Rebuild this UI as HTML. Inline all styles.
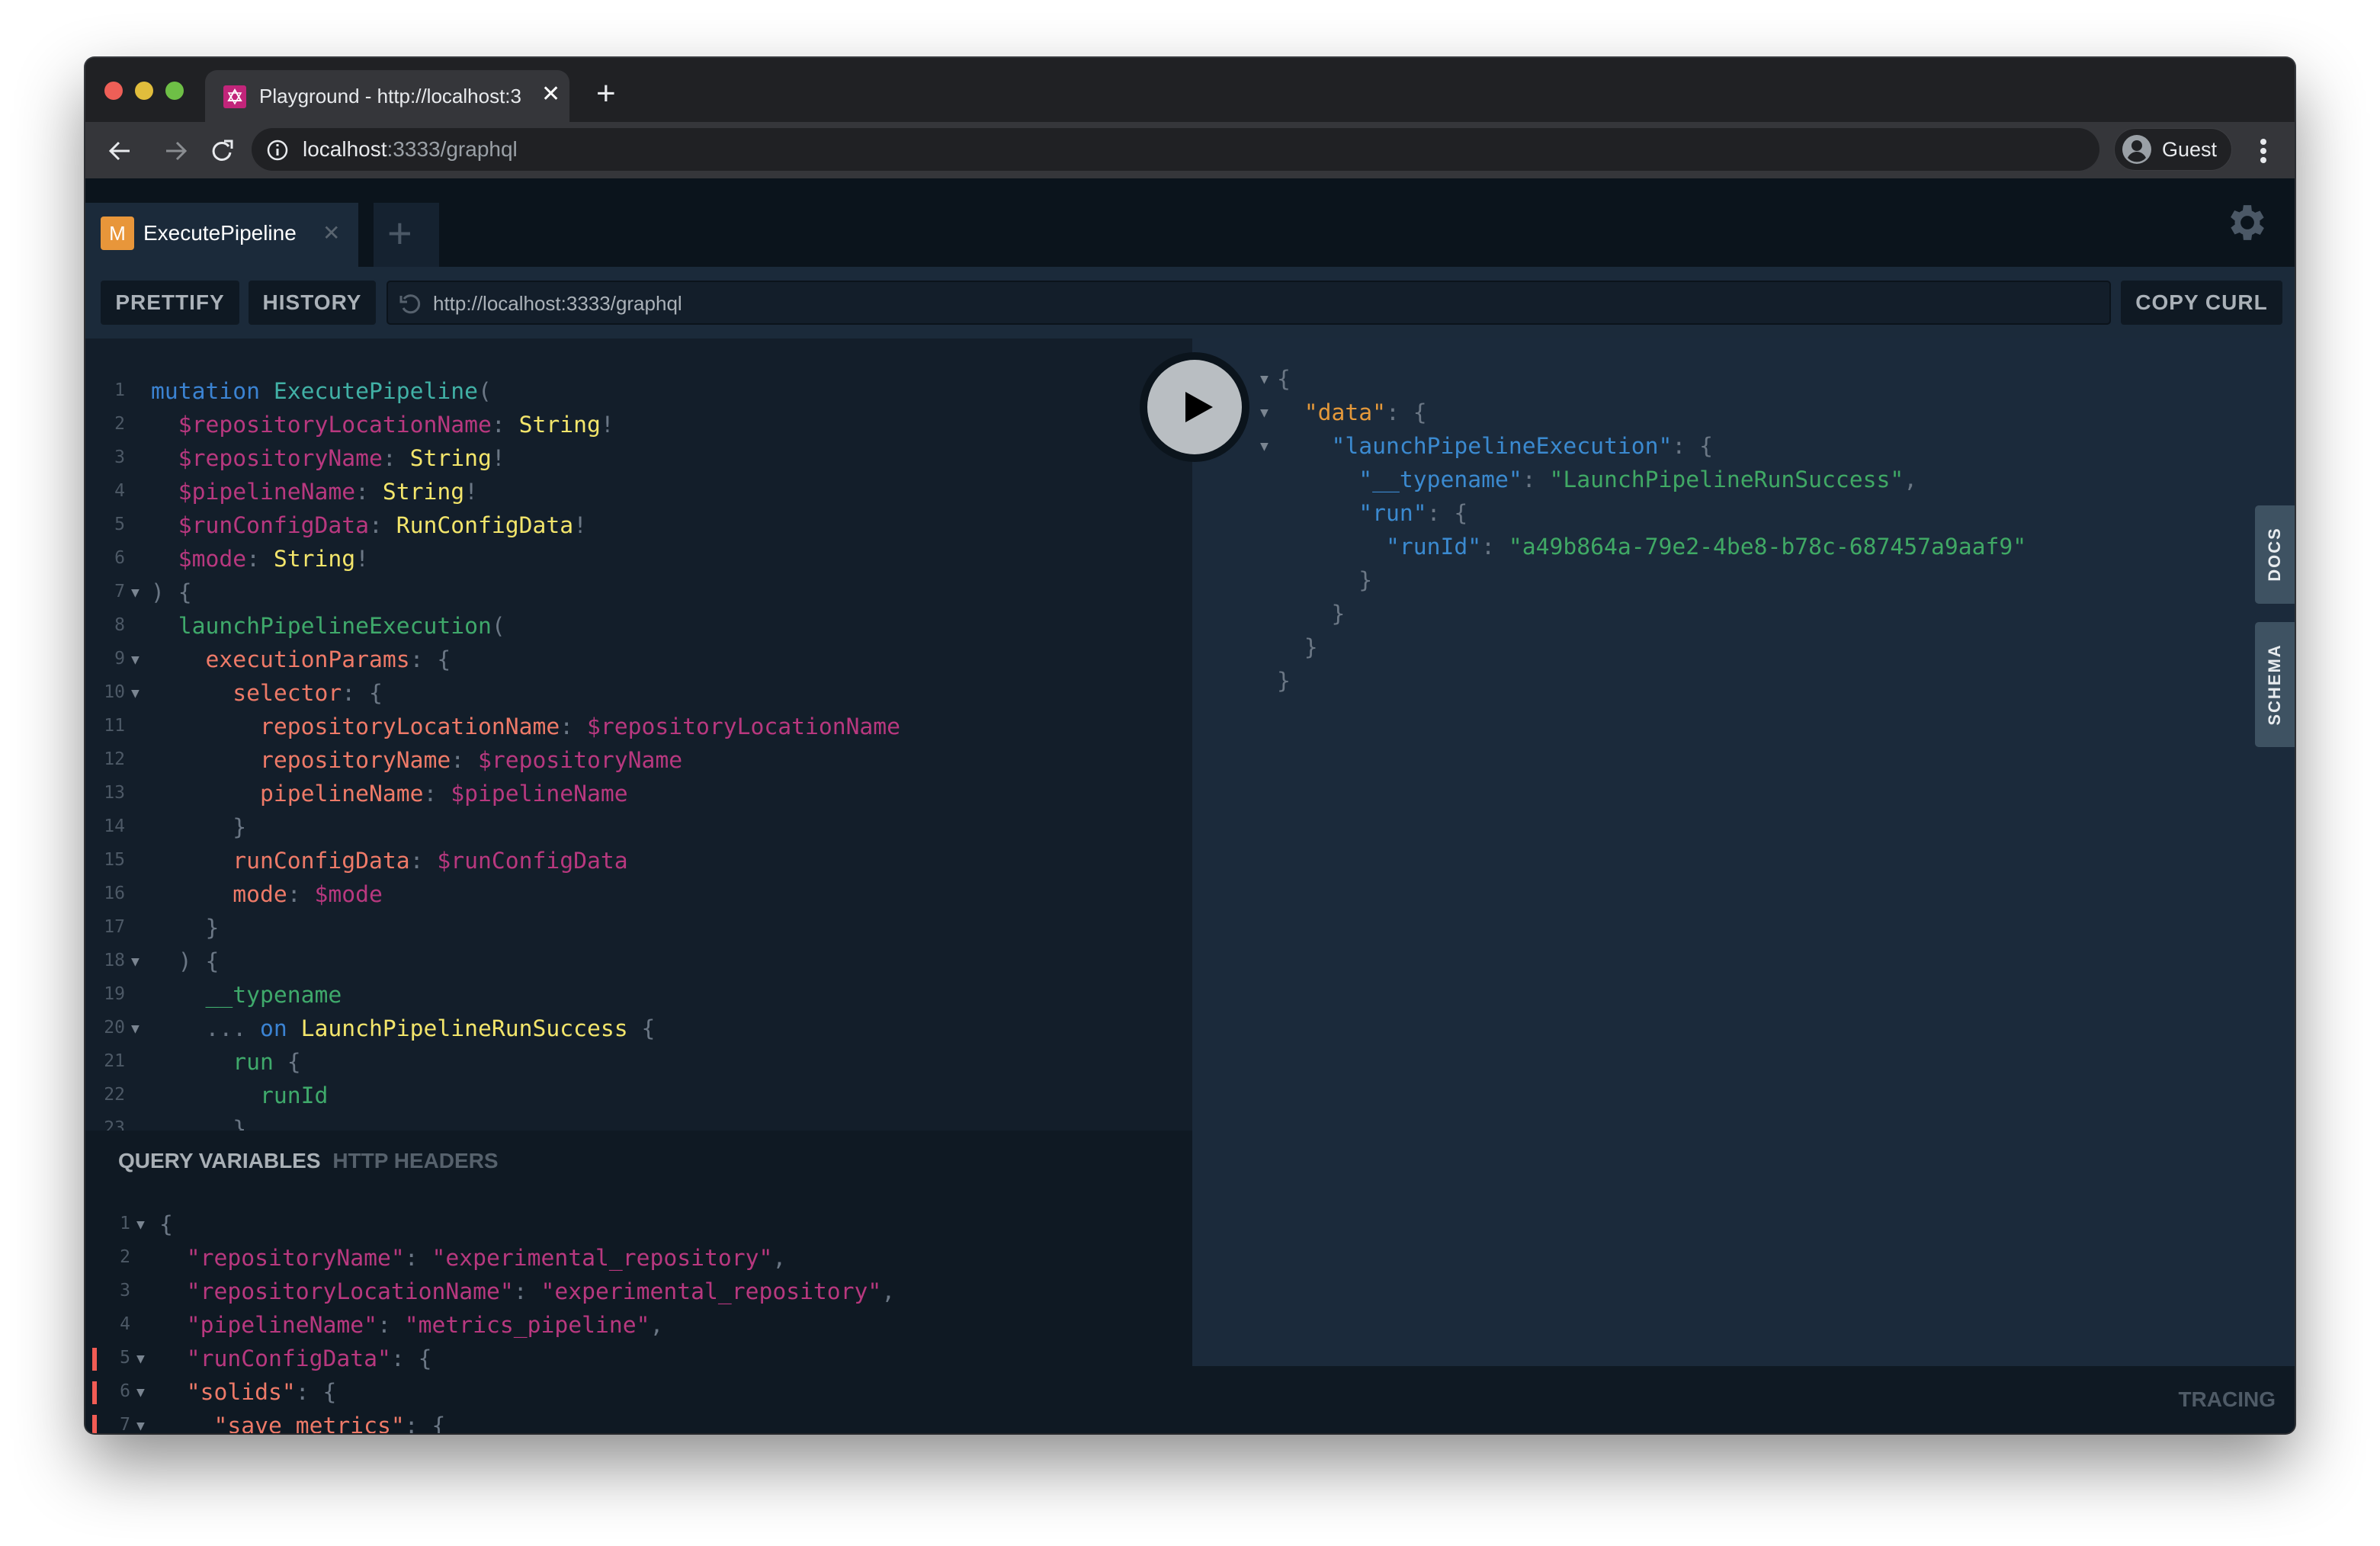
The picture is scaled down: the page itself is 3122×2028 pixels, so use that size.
<!DOCTYPE html>
<html><head><meta charset="utf-8"><style>
*{margin:0;padding:0;box-sizing:border-box}
body{width:3122px;height:2028px;background:#fff;position:relative;overflow:hidden;font-family:"Liberation Sans",sans-serif}
.a{position:absolute}
.win{left:112px;top:76px;width:2898px;height:1804px;border-radius:12px;overflow:hidden;background:#0b141c;box-shadow:0 40px 90px rgba(0,0,0,.45),0 0 0 2px #3a3d42}
.mono{font-family:"DejaVu Sans Mono","Liberation Mono",monospace;font-size:29.7px;white-space:pre}
.ln{position:absolute;height:44px;line-height:44px;width:100%}
.g{position:absolute;text-align:right;font-family:"DejaVu Sans Mono",monospace;font-size:23px;color:#4d5966;line-height:40px}
.ar{position:absolute;font-size:18px;color:#7a8591;line-height:44px}
.kw{color:#3b83d2}.df{color:#41b1a6}.vr{color:#b8387f}.ty{color:#f3e56b}.fd{color:#3fa96b}.at{color:#ee7a68}.p{color:#6b7785}.or{color:#e5993a}.jk{color:#3b8ad0}.js{color:#40a965}
.btn{position:absolute;top:292px;height:58px;background:#0f1923;border-radius:4px;color:#aab1b8;font-weight:bold;font-size:28px;line-height:58px;text-align:center;letter-spacing:1px}
</style></head><body>
<div class="a win">
 <div class="a" style="left:0;top:0;width:2898px;height:84px;background:#202124"></div>
 <div class="a" style="left:25px;top:31px;width:24px;height:24px;border-radius:50%;background:#ee5f57"></div>
 <div class="a" style="left:65px;top:31px;width:24px;height:24px;border-radius:50%;background:#e1bd3c"></div>
 <div class="a" style="left:105px;top:31px;width:24px;height:24px;border-radius:50%;background:#6ebf46"></div>
 <div class="a" style="left:157px;top:16px;width:478px;height:70px;background:#35363a;border-radius:16px 16px 0 0"></div>
 <div class="a" style="left:181px;top:36px;width:30px;height:30px;background:#c2257a;border-radius:3px"><svg width="30" height="30" viewBox="0 0 30 30"><polygon points="15,6 23,20 7,20" fill="none" stroke="#fff" stroke-width="2"/><polygon points="15,24 7,10 23,10" fill="none" stroke="#fff" stroke-width="1.5"/></svg></div>
 <div class="a" style="left:228px;top:30px;font-size:26px;color:#e8eaed;line-height:40px;width:360px;overflow:hidden;white-space:nowrap">Playground - http://localhost:3</div>
 <div class="a" style="left:598px;top:28px;font-size:30px;color:#fff;line-height:40px">✕</div>
 <div class="a" style="left:670px;top:22px;font-size:44px;color:#e8eaed;line-height:50px">+</div>
 <div class="a" style="left:0;top:84px;width:2898px;height:74px;background:#35363a"></div>
 <svg class="a" style="left:28px;top:104px" width="290" height="36" viewBox="0 0 290 36"><path d="M30 18H6M16 7L5 18l11 11" stroke="#e8eaed" stroke-width="3" fill="none"/><path d="M78 18h24M92 7l11 11-11 11" stroke="#8a8d91" stroke-width="3" fill="none"/><path d="M160 12a11 11 0 1 0 2 8" stroke="#e8eaed" stroke-width="3" fill="none"/><path d="M154 5h10v10" stroke="#e8eaed" stroke-width="3" fill="none"/></svg>
 <div class="a" style="left:218px;top:92px;width:2424px;height:56px;border-radius:28px;background:#202124"></div>
 <svg class="a" style="left:238px;top:107px" width="28" height="28" viewBox="0 0 28 28"><circle cx="14" cy="14" r="12" stroke="#e8eaed" stroke-width="2.5" fill="none"/><rect x="12.5" y="12" width="3" height="9" fill="#e8eaed"/><rect x="12.5" y="6" width="3" height="3" fill="#e8eaed"/></svg>
 <div class="a" style="left:285px;top:100px;font-size:28px;line-height:40px;color:#e8eaed">localhost<span style="color:#9aa0a6">:3333/graphql</span></div>
 <div class="a" style="left:2661px;top:92px;width:155px;height:56px;border-radius:28px;background:#202124;border:1px solid #3c3d41"></div>
 <svg class="a" style="left:2672px;top:101px" width="38" height="38" viewBox="0 0 38 38"><circle cx="19" cy="19" r="19" fill="#9aa0a6"/><circle cx="19" cy="14" r="7" fill="#202124"/><path d="M7 30c3-6 8-8 12-8s9 2 12 8a16 16 0 0 1-24 0z" fill="#202124"/></svg>
 <div class="a" style="left:2724px;top:100px;font-size:27px;line-height:40px;color:#e8eaed">Guest</div>
 <div class="a" style="left:2853px;top:106px;width:8px;height:8px;border-radius:50%;background:#e8eaed"></div>
 <div class="a" style="left:2853px;top:118px;width:8px;height:8px;border-radius:50%;background:#e8eaed"></div>
 <div class="a" style="left:2853px;top:130px;width:8px;height:8px;border-radius:50%;background:#e8eaed"></div>
 <div class="a" style="left:0;top:190px;width:358px;height:84px;background:#1b2a3a"></div>
 <div class="a" style="left:20px;top:208px;width:44px;height:44px;background:#e8963a;border-radius:4px;color:#fff;font-size:26px;line-height:44px;text-align:center">M</div>
 <div class="a" style="left:76px;top:210px;font-size:28px;color:#fff;line-height:40px">ExecutePipeline</div>
 <div class="a" style="left:311px;top:210px;font-size:28px;color:#5a6570;line-height:40px">✕</div>
 <div class="a" style="left:378px;top:190px;width:86px;height:84px;background:#152230"></div>
 <div class="a" style="left:396px;top:198px;font-size:56px;color:#4b5866;line-height:64px">+</div>
 <svg class="a" style="left:2808px;top:188px" width="56" height="56" viewBox="2 1 22 22"><path fill="#4b5866" d="M19.4 13a7.5 7.5 0 0 0 0-2l2.1-1.6-2-3.5-2.5 1a7 7 0 0 0-1.7-1L15 3h-4l-.4 2.7a7 7 0 0 0-1.7 1l-2.5-1-2 3.5L6.6 11a7.5 7.5 0 0 0 0 2l-2.1 1.6 2 3.5 2.5-1a7 7 0 0 0 1.7 1L11 21h4l.4-2.7a7 7 0 0 0 1.7-1l2.5 1 2-3.5zM13 15.5a3.5 3.5 0 1 1 0-7 3.5 3.5 0 0 1 0 7z"/></svg>
 <div class="a" style="left:0;top:274px;width:2898px;height:94px;background:#1b2a3a"></div>
 <div class="btn" style="left:20px;width:182px">PRETTIFY</div>
 <div class="btn" style="left:214px;width:167px">HISTORY</div>
 <div class="a" style="left:395px;top:292px;width:2262px;height:58px;background:#131e2a;border:2px solid #0b131b;border-radius:5px"></div>
 <svg class="a" style="left:410px;top:306px" width="32" height="32" viewBox="0 0 32 32"><path d="M8 10a11 11 0 1 1-1 12" stroke="#56616d" stroke-width="3" fill="none"/><path d="M4 6v8h8" stroke="#56616d" stroke-width="3" fill="none"/></svg>
 <div class="a" style="left:456px;top:302px;font-size:26px;color:#aab1b8;line-height:40px">http://localhost:3333/graphql</div>
 <div class="btn" style="left:2670px;width:212px">COPY CURL</div>

 <div class="a mono" style="left:0;top:368px;width:1452px;height:1039px;background:#131e2a;overflow:hidden">
  <div style="position:absolute;left:0;top:48px;width:100%">
   <div class="ln" style="top:0"><span class="g" style="width:52px">1</span><span style="position:absolute;left:86px"><span class="kw">mutation</span> <span class="df">ExecutePipeline</span><span class="p">(</span></span></div>
   <div class="ln" style="top:44px"><span class="g" style="width:52px">2</span><span style="position:absolute;left:86px">  <span class="vr">$repositoryLocationName</span><span class="p">:</span> <span class="ty">String</span><span class="p">!</span></span></div>
   <div class="ln" style="top:88px"><span class="g" style="width:52px">3</span><span style="position:absolute;left:86px">  <span class="vr">$repositoryName</span><span class="p">:</span> <span class="ty">String</span><span class="p">!</span></span></div>
   <div class="ln" style="top:132px"><span class="g" style="width:52px">4</span><span style="position:absolute;left:86px">  <span class="vr">$pipelineName</span><span class="p">:</span> <span class="ty">String</span><span class="p">!</span></span></div>
   <div class="ln" style="top:176px"><span class="g" style="width:52px">5</span><span style="position:absolute;left:86px">  <span class="vr">$runConfigData</span><span class="p">:</span> <span class="ty">RunConfigData</span><span class="p">!</span></span></div>
   <div class="ln" style="top:220px"><span class="g" style="width:52px">6</span><span style="position:absolute;left:86px">  <span class="vr">$mode</span><span class="p">:</span> <span class="ty">String</span><span class="p">!</span></span></div>
   <div class="ln" style="top:264px"><span class="g" style="width:52px">7</span><span class="ar" style="left:60px">▼</span><span style="position:absolute;left:86px"><span class="p">) {</span></span></div>
   <div class="ln" style="top:308px"><span class="g" style="width:52px">8</span><span style="position:absolute;left:86px">  <span class="fd">launchPipelineExecution</span><span class="p">(</span></span></div>
   <div class="ln" style="top:352px"><span class="g" style="width:52px">9</span><span class="ar" style="left:60px">▼</span><span style="position:absolute;left:86px">    <span class="at">executionParams</span><span class="p">: {</span></span></div>
   <div class="ln" style="top:396px"><span class="g" style="width:52px">10</span><span class="ar" style="left:60px">▼</span><span style="position:absolute;left:86px">      <span class="at">selector</span><span class="p">: {</span></span></div>
   <div class="ln" style="top:440px"><span class="g" style="width:52px">11</span><span style="position:absolute;left:86px">        <span class="at">repositoryLocationName</span><span class="p">:</span> <span class="vr">$repositoryLocationName</span></span></div>
   <div class="ln" style="top:484px"><span class="g" style="width:52px">12</span><span style="position:absolute;left:86px">        <span class="at">repositoryName</span><span class="p">:</span> <span class="vr">$repositoryName</span></span></div>
   <div class="ln" style="top:528px"><span class="g" style="width:52px">13</span><span style="position:absolute;left:86px">        <span class="at">pipelineName</span><span class="p">:</span> <span class="vr">$pipelineName</span></span></div>
   <div class="ln" style="top:572px"><span class="g" style="width:52px">14</span><span style="position:absolute;left:86px">      <span class="p">}</span></span></div>
   <div class="ln" style="top:616px"><span class="g" style="width:52px">15</span><span style="position:absolute;left:86px">      <span class="at">runConfigData</span><span class="p">:</span> <span class="vr">$runConfigData</span></span></div>
   <div class="ln" style="top:660px"><span class="g" style="width:52px">16</span><span style="position:absolute;left:86px">      <span class="at">mode</span><span class="p">:</span> <span class="vr">$mode</span></span></div>
   <div class="ln" style="top:704px"><span class="g" style="width:52px">17</span><span style="position:absolute;left:86px">    <span class="p">}</span></span></div>
   <div class="ln" style="top:748px"><span class="g" style="width:52px">18</span><span class="ar" style="left:60px">▼</span><span style="position:absolute;left:86px">  <span class="p">) {</span></span></div>
   <div class="ln" style="top:792px"><span class="g" style="width:52px">19</span><span style="position:absolute;left:86px">    <span class="fd">__typename</span></span></div>
   <div class="ln" style="top:836px"><span class="g" style="width:52px">20</span><span class="ar" style="left:60px">▼</span><span style="position:absolute;left:86px">    <span class="p">...</span> <span class="kw">on</span> <span class="ty">LaunchPipelineRunSuccess</span> <span class="p">{</span></span></div>
   <div class="ln" style="top:880px"><span class="g" style="width:52px">21</span><span style="position:absolute;left:86px">      <span class="fd">run</span> <span class="p">{</span></span></div>
   <div class="ln" style="top:924px"><span class="g" style="width:52px">22</span><span style="position:absolute;left:86px">        <span class="fd">runId</span></span></div>
   <div class="ln" style="top:968px"><span class="g" style="width:52px">23</span><span style="position:absolute;left:86px">      <span class="p">}</span></span></div>
  </div>
 </div>

 <div class="a mono" style="left:1452px;top:368px;width:1446px;height:1348px;background:#1b2a3b;overflow:hidden">
  <div style="position:absolute;left:0;top:32px;width:100%">
   <div class="ln" style="top:0"><span class="ar" style="left:89px">▼</span><span style="position:absolute;left:111px"><span class="p">{</span></span></div>
   <div class="ln" style="top:44px"><span class="ar" style="left:89px">▼</span><span style="position:absolute;left:111px">  <span class="or">"data"</span><span class="p">: {</span></span></div>
   <div class="ln" style="top:88px"><span class="ar" style="left:89px">▼</span><span style="position:absolute;left:111px">    <span class="jk">"launchPipelineExecution"</span><span class="p">: {</span></span></div>
   <div class="ln" style="top:132px"><span style="position:absolute;left:111px">      <span class="jk">"__typename"</span><span class="p">:</span> <span class="js">"LaunchPipelineRunSuccess"</span><span class="p">,</span></span></div>
   <div class="ln" style="top:176px"><span style="position:absolute;left:111px">      <span class="jk">"run"</span><span class="p">: {</span></span></div>
   <div class="ln" style="top:220px"><span style="position:absolute;left:111px">        <span class="jk">"runId"</span><span class="p">:</span> <span class="js">"a49b864a-79e2-4be8-b78c-687457a9aaf9"</span></span></div>
   <div class="ln" style="top:264px"><span style="position:absolute;left:111px">      <span class="p">}</span></span></div>
   <div class="ln" style="top:308px"><span style="position:absolute;left:111px">    <span class="p">}</span></span></div>
   <div class="ln" style="top:352px"><span style="position:absolute;left:111px">  <span class="p">}</span></span></div>
   <div class="ln" style="top:396px"><span style="position:absolute;left:111px"><span class="p">}</span></span></div>
  </div>
 </div>
 <div class="a" style="left:2846px;top:587px;width:52px;height:129px;background:#3e5262;border-radius:5px 0 0 5px"></div>
 <div class="a" style="left:2872px;top:651px;transform:translate(-50%,-50%) rotate(-90deg);color:#e8ecef;font-weight:bold;font-size:22px;letter-spacing:2px;white-space:nowrap">DOCS</div>
 <div class="a" style="left:2846px;top:740px;width:52px;height:164px;background:#3e5262;border-radius:5px 0 0 5px"></div>
 <div class="a" style="left:2872px;top:822px;transform:translate(-50%,-50%) rotate(-90deg);color:#e8ecef;font-weight:bold;font-size:22px;letter-spacing:2px;white-space:nowrap">SCHEMA</div>
 <div class="a" style="left:1452px;top:1716px;width:1446px;height:88px;background:#0f1923"></div>
 <div class="a" style="right:25px;top:1740px;font-weight:bold;font-size:28px;line-height:40px;color:#4f5b67">TRACING</div>

 <div class="a" style="left:1383px;top:386px;width:144px;height:144px;border-radius:50%;background:#0b141c"></div>
 <div class="a" style="left:1393px;top:396px;width:124px;height:124px;border-radius:50%;background:#b9bec2"></div>
 <svg class="a" style="left:1441px;top:438px" width="40" height="40" viewBox="0 0 40 40"><polygon points="2,0 38,20 2,40" fill="#000"/></svg>

 <div class="a" style="left:0;top:1407px;width:1452px;height:397px;background:#0f1923;overflow:hidden">
  <div class="a" style="left:43px;top:20px;font-weight:bold;font-size:28px;line-height:40px;color:#a9b0b6">QUERY VARIABLES <span style="color:#56616c;margin-left:8px">HTTP HEADERS</span></div>
  <div class="a" style="left:9px;top:285px;width:6px;height:30px;background:#f25c54"></div>
  <div class="a" style="left:9px;top:329px;width:6px;height:30px;background:#f25c54"></div>
  <div class="a" style="left:9px;top:373px;width:6px;height:30px;background:#f25c54"></div>
  <div class="mono" style="position:absolute;left:0;top:102px;width:100%">
   <div class="ln" style="top:0"><span class="g" style="width:59px">1</span><span class="ar" style="left:67px">▼</span><span style="position:absolute;left:97px"><span class="p">{</span></span></div>
   <div class="ln" style="top:44px"><span class="g" style="width:59px">2</span><span style="position:absolute;left:97px">  <span class="vr">"repositoryName"</span><span class="p">:</span> <span class="vr">"experimental_repository"</span><span class="p">,</span></span></div>
   <div class="ln" style="top:88px"><span class="g" style="width:59px">3</span><span style="position:absolute;left:97px">  <span class="vr">"repositoryLocationName"</span><span class="p">:</span> <span class="vr">"experimental_repository"</span><span class="p">,</span></span></div>
   <div class="ln" style="top:132px"><span class="g" style="width:59px">4</span><span style="position:absolute;left:97px">  <span class="vr">"pipelineName"</span><span class="p">:</span> <span class="vr">"metrics_pipeline"</span><span class="p">,</span></span></div>
   <div class="ln" style="top:176px"><span class="g" style="width:59px">5</span><span class="ar" style="left:67px">▼</span><span style="position:absolute;left:97px">  <span class="vr">"runConfigData"</span><span class="p">: {</span></span></div>
   <div class="ln" style="top:220px"><span class="g" style="width:59px">6</span><span class="ar" style="left:67px">▼</span><span style="position:absolute;left:97px">  <span class="at">"solids"</span><span class="p">: {</span></span></div>
   <div class="ln" style="top:264px"><span class="g" style="width:59px">7</span><span class="ar" style="left:67px">▼</span><span style="position:absolute;left:97px">    <span class="at">"save_metrics"</span><span class="p">: {</span></span></div>
  </div>
 </div>
</div>
</body></html>
